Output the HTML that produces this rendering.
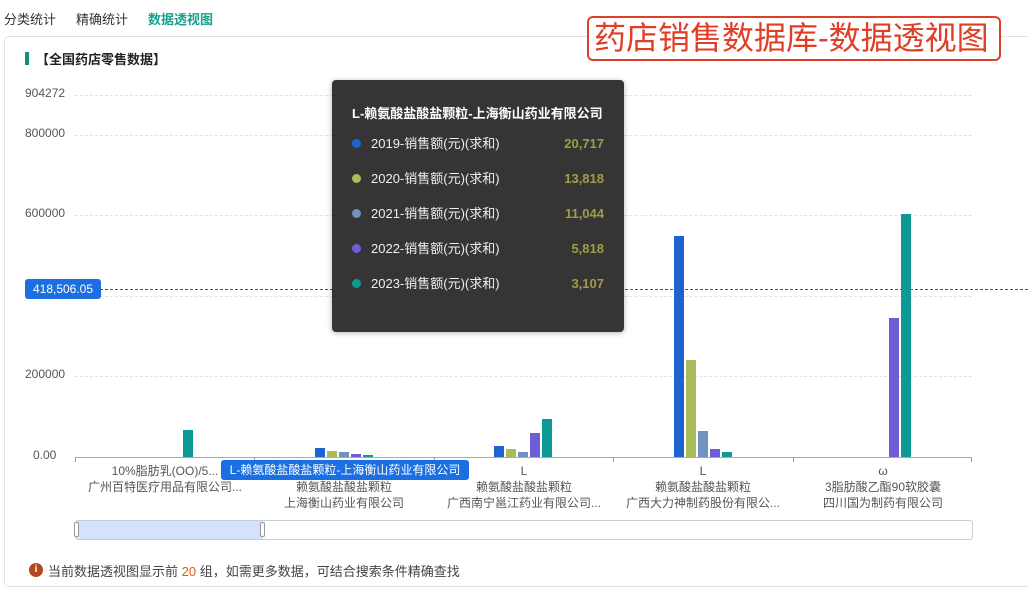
<!DOCTYPE html>
<html><head><meta charset="utf-8">
<style>
*{margin:0;padding:0;box-sizing:border-box}
body{width:1028px;height:590px;background:#fff;position:relative;overflow:hidden;font-family:"Liberation Sans","Noto Sans CJK SC",sans-serif;color:#333}
.a{position:absolute;white-space:nowrap}
.tab{top:9px;font-size:13px;color:#333}
.grid{position:absolute;left:75px;width:897px;height:0;border-top:1px dashed #e3e3e3}
.yl{position:absolute;left:25px;font-size:12px;color:#555}
.bar{position:absolute}
.xl{position:absolute;font-size:12px;color:#555;text-align:center;line-height:16px;width:180px}
.tk{position:absolute;top:457px;width:1px;height:5px;background:#999}
.row{position:absolute;left:20px;right:20px;font-size:13px;color:#eee;height:20px;line-height:20px}
.row i{display:inline-block;width:9px;height:9px;border-radius:50%;margin-right:10px;vertical-align:0}
.row b{position:absolute;right:0;color:#a39b4a;font-weight:bold}
</style></head><body>
<div class="a tab" style="left:4px">分类统计</div>
<div class="a tab" style="left:76px">精确统计</div>
<div class="a tab" style="left:148px;color:#17a08f;font-weight:bold">数据透视图</div>

<div class="a" style="left:4px;top:36px;width:1040px;height:551px;border:1px solid #e2e2e2;border-radius:5px"></div>

<div class="a" style="left:25px;top:52px;width:4px;height:13px;background:#129079"></div>
<div class="a" style="left:36px;top:49px;font-size:13px;font-weight:bold;color:#222">【全国药店零售数据】</div>

<div class="a" style="left:587px;top:16px;width:414px;height:45px;border:2px solid #e03e26;border-radius:6px;background:#fff"></div>
<div class="a" style="left:594px;top:17px;font-size:32px;line-height:42px;color:#e03e26">药店销售数据库-数据透视图</div>

<div class="grid" style="top:95px"></div>
<div class="grid" style="top:135px"></div>
<div class="grid" style="top:215px"></div>
<div class="grid" style="top:296px"></div>
<div class="grid" style="top:376px"></div>
<div class="yl" style="top:86px">904272</div>
<div class="yl" style="top:126px">800000</div>
<div class="yl" style="top:206px">600000</div>
<div class="yl" style="top:367px">200000</div>
<div class="yl" style="top:448px;left:33px">0.00</div>

<div class="a" style="left:100px;top:289px;width:928px;border-top:1px dashed #555"></div>
<div class="a" style="left:25px;top:279px;width:76px;height:20px;background:#1b6fe0;color:#fff;font-size:12px;line-height:20px;text-align:center;border-radius:3px">418,506.05</div>

<div class="a" style="left:75px;top:457px;width:897px;height:1px;background:#aaa"></div>
<div class="tk" style="left:75px"></div><div class="tk" style="left:254px"></div><div class="tk" style="left:434px"></div><div class="tk" style="left:613px"></div><div class="tk" style="left:793px"></div><div class="tk" style="left:971px"></div>

<div class="bar" style="left:183px;top:430px;width:10px;height:27px;background:#0e9a94"></div>

<div class="bar" style="left:315px;top:448px;width:10px;height:9px;background:#1f63d1"></div>
<div class="bar" style="left:327px;top:451px;width:10px;height:6px;background:#a8bd5a"></div>
<div class="bar" style="left:339px;top:452px;width:10px;height:5px;background:#7191be"></div>
<div class="bar" style="left:351px;top:454px;width:10px;height:3px;background:#6d5dd6"></div>
<div class="bar" style="left:363px;top:455px;width:10px;height:2px;background:#0e9a94"></div>

<div class="bar" style="left:494px;top:446px;width:10px;height:11px;background:#1f63d1"></div>
<div class="bar" style="left:506px;top:449px;width:10px;height:8px;background:#a8bd5a"></div>
<div class="bar" style="left:518px;top:452px;width:10px;height:5px;background:#7191be"></div>
<div class="bar" style="left:530px;top:433px;width:10px;height:24px;background:#6d5dd6"></div>
<div class="bar" style="left:542px;top:419px;width:10px;height:38px;background:#0e9a94"></div>

<div class="bar" style="left:674px;top:236px;width:10px;height:221px;background:#1f63d1"></div>
<div class="bar" style="left:686px;top:360px;width:10px;height:97px;background:#a8bd5a"></div>
<div class="bar" style="left:698px;top:431px;width:10px;height:26px;background:#7191be"></div>
<div class="bar" style="left:710px;top:449px;width:10px;height:8px;background:#6d5dd6"></div>
<div class="bar" style="left:722px;top:452px;width:10px;height:5px;background:#0e9a94"></div>

<div class="bar" style="left:889px;top:318px;width:10px;height:139px;background:#6d5dd6"></div>
<div class="bar" style="left:901px;top:214px;width:10px;height:243px;background:#0e9a94"></div>

<div class="xl" style="left:75px;top:463px">10%脂肪乳(OO)/5...<br>广州百特医疗用品有限公司...</div>
<div class="xl" style="left:254px;top:463px"><br>赖氨酸盐酸盐颗粒<br>上海衡山药业有限公司</div>
<div class="xl" style="left:434px;top:463px">L<br>赖氨酸盐酸盐颗粒<br>广西南宁邕江药业有限公司...</div>
<div class="xl" style="left:613px;top:463px">L<br>赖氨酸盐酸盐颗粒<br>广西大力神制药股份有限公...</div>
<div class="xl" style="left:793px;top:463px">ω<br>3脂肪酸乙酯90软胶囊<br>四川国为制药有限公司</div>
<div class="a" style="left:221px;top:460px;width:248px;height:20px;background:#1b6fe0;color:#fff;font-size:12px;line-height:20px;text-align:center;border-radius:3px">L-赖氨酸盐酸盐颗粒-上海衡山药业有限公司</div>

<div class="a" style="left:75px;top:520px;width:898px;height:20px;border:1px solid #c8cbd8;border-radius:3px"></div>
<div class="a" style="left:76px;top:521px;width:187px;height:18px;background:#d5e2fb"></div>
<div class="a" style="left:74px;top:522px;width:5px;height:15px;border:1px solid #999;border-radius:2px;background:#fff"></div>
<div class="a" style="left:260px;top:522px;width:5px;height:15px;border:1px solid #999;border-radius:2px;background:#fff"></div>

<div class="a" style="left:29px;top:563px;width:14px;height:14px;border-radius:50%;background:#b4461f;color:#fff;font-size:10px;font-weight:bold;line-height:14px;text-align:center">i</div>
<div class="a" style="left:48px;top:561px;font-size:13px;color:#444">当前数据透视图显示前 <span style="color:#e8560a">20</span> 组，如需更多数据，可结合搜索条件精确查找</div>

<div class="a" style="left:332px;top:80px;width:292px;height:252px;background:#353535;border-radius:4px;box-shadow:0 1px 6px rgba(0,0,0,.3)">
  <div class="a" style="left:20px;top:23px;font-size:13px;font-weight:bold;color:#fff">L-赖氨酸盐酸盐颗粒-上海衡山药业有限公司</div>
  <div class="row" style="top:54px"><i style="background:#1f63d1"></i>2019-销售额(元)(求和)<b>20,717</b></div>
  <div class="row" style="top:89px"><i style="background:#a8bd5a"></i>2020-销售额(元)(求和)<b>13,818</b></div>
  <div class="row" style="top:124px"><i style="background:#7191be"></i>2021-销售额(元)(求和)<b>11,044</b></div>
  <div class="row" style="top:159px"><i style="background:#6d5dd6"></i>2022-销售额(元)(求和)<b>5,818</b></div>
  <div class="row" style="top:194px"><i style="background:#0e9a94"></i>2023-销售额(元)(求和)<b>3,107</b></div>
</div>
</body></html>
